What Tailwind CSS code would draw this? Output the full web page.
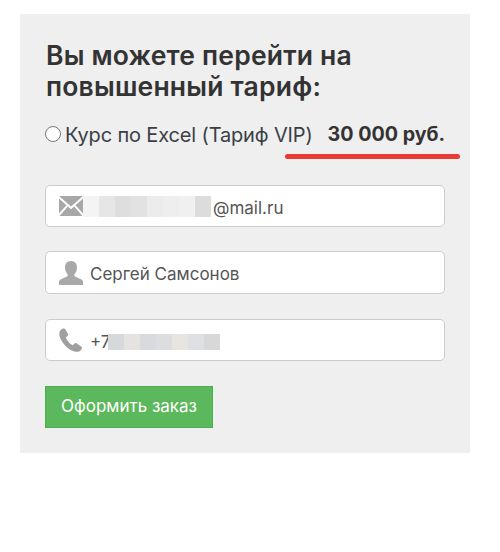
<!DOCTYPE html>
<html lang="ru">
<head>
    <meta charset="UTF-8">
    <title>Тариф</title>
    <script src="https://cdn.jsdelivr.net/npm/@tailwindcss/browser@4"></script>
</head>
<body class="bg-white font-['Inter',sans-serif] text-[#333]">
    <div class="relative ml-5 mt-[14px] w-[450px] h-[439px] bg-[#efefef] px-[25px] pt-[26px]">
        <h2 class="text-[26.5px] leading-[31px] font-semibold tracking-[0.2px] text-[#333] ml-px whitespace-nowrap">Вы можете перейти на<br>повышенный тариф:</h2>

        <!-- Tariff -->
        <div class="flex items-center mt-[20px] h-[26px] text-[20px] whitespace-nowrap">
            <span class="w-[16px] h-[16px] shrink-0 rounded-full bg-white border border-[#767676] mr-[4px] mb-[3px]"></span>
            <span class="text-[#3a3f45] tracking-[-0.15px]">Курс по Excel (Тариф VIP)</span>
            <span class="ml-[15px] text-[19.7px] font-bold text-[#333]">30 000 руб.</span>
        </div>
        <div class="absolute left-[265px] top-[140px] w-[175px] h-[5px] rounded-full bg-[#ea3a33]"></div>

        <!-- Email -->
        <div class="flex items-center mt-[37px] w-[400px] h-[42px] bg-white border border-[#ccc] rounded-[5px] pl-[13px] text-[17px] text-[#555]">
            <svg class="w-[24px] h-[20px] shrink-0" viewBox="0 0 24 20"><path fill="#a8a8a8" d="M0 0h24L12 10.500zM0 2.500l7.500 6.800L0 17.500zM24 2.500l-7.500 6.800 7.500 8.200zM8.800 10.500l3.200 2.800 3.200-2.800 8.300 9.500H.5z"/></svg>
            <div class="flex h-[21px] shrink-0 mt-px">
                <div class="w-[16px] bg-[#f4f4f4]"></div><div class="w-[16px] bg-[#e6e6e6]"></div><div class="w-[16px] bg-[#dedede]"></div><div class="w-[16px] bg-[#e2e2e2]"></div><div class="w-[16px] bg-[#ececec]"></div><div class="w-[16px] bg-[#eeeeee]"></div><div class="w-[16px] bg-[#f0f0f0]"></div><div class="w-[16px] bg-[#dcdcdc]"></div>
            </div>
            <span class="ml-[2px] pt-[5px]">@mail.ru</span>
        </div>

        <!-- Name -->
        <div class="flex items-center mt-[24px] w-[400px] h-[43px] bg-white border border-[#ccc] rounded-[5px] pl-[13px] text-[17px] text-[#555]">
            <svg class="w-[24px] h-[24px] shrink-0" viewBox="0 0 24 24"><path fill="#a8a8a8" d="M12 0c3.800 0 6 2.800 6 6.500 0 2.800-1 5-2.500 6.800-.5.600-.3 1.700.5 2.200 2.500 1.300 6.500 2.300 8 4.500V24H0v-4c1.500-2.200 5.500-3.200 8-4.500.8-.5 1-1.600.5-2.200C7 11.500 6 9.300 6 6.500 6 2.800 8.200 0 12 0z"/></svg>
            <span class="ml-[7px] pt-[5px]">Сергей Самсонов</span>
        </div>

        <!-- Phone -->
        <div class="flex items-center mt-[25px] w-[400px] h-[42px] bg-white border border-[#ccc] rounded-[5px] pl-[13px] text-[17px] text-[#555]">
            <svg class="w-[24px] h-[24px] shrink-0" viewBox="0 0 24 24"><path fill="#a0a0a0" d="M2 1.500C3.500.3 5.500.2 6.300 1.200l2.600 4.500c.5 1 .2 1.800-.6 2.500L6.800 9.500c1 3 3.500 6 6.800 7.700l1.700-1.500c.8-.7 1.700-.8 2.500-.3l4.500 3.200c1 .8.800 2.500-.5 3.700-1.500 1.400-3.800 2-6.500 1.200C8.500 21.500 2.500 14.500.5 8 0 5.500.5 3 2 1.500z"/></svg>
            <span class="ml-[7px] pt-[5px]">+7</span>
            <div class="flex h-[16px] -ml-[3px] mt-[3px] shrink-0">
                <div class="w-[16px] bg-[#d6d8db]"></div><div class="w-[16px] bg-[#e4e3e0]"></div><div class="w-[16px] bg-[#d8dade]"></div><div class="w-[16px] bg-[#dcdddf]"></div><div class="w-[16px] bg-[#e8e4df]"></div><div class="w-[16px] bg-[#dfe0e4]"></div><div class="w-[16px] bg-[#d8d8d8]"></div>
            </div>
        </div>

        <button class="block mt-[25px] w-[168px] h-[42px] bg-[#5cb85c] border border-[#4cae4c] text-white text-[17px]">Оформить заказ</button>
    </div>
</body>
</html>
